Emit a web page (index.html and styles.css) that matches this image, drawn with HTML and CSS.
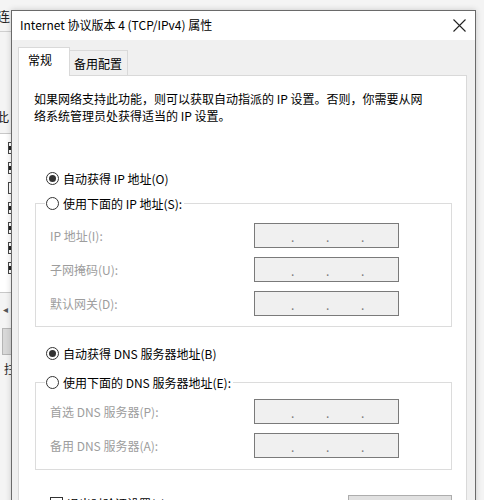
FILE: index.html
```html
<!DOCTYPE html>
<html lang="zh-CN">
<head>
<meta charset="utf-8">
<title>Internet 协议版本 4 (TCP/IPv4) 属性</title>
<link rel="stylesheet" href="styles.css">
</head>
<body>
<div class="desktop">
  <div class="bgwin">
    <div class="bg-char bg-top">连</div>
    <div class="bg-sep"></div>
    <div class="bg-char bg-mid">此</div>
    <div class="bg-list">
      <span class="bg-chk on"></span>
      <span class="bg-chk on"></span>
      <span class="bg-chk"></span>
      <span class="bg-chk on"></span>
      <span class="bg-chk on"></span>
      <span class="bg-chk on"></span>
      <span class="bg-chk on"></span>
    </div>
    <div class="bg-arrow">◂</div>
    <div class="bg-btn"></div>
    <div class="bg-char bg-low">拄</div>
  </div>

  <div class="dialog">
    <div class="titlebar">
      <span class="title">Internet 协议版本 4 (TCP/IPv4) 属性</span>
      <svg class="close" width="13" height="13" viewBox="0 0 13 13"><path d="M0.5 0.5 L12.5 12.5 M12.5 0.5 L0.5 12.5" stroke="#222" stroke-width="1.1" fill="none"/></svg>
    </div>
    <div class="body">
      <div class="tabs">
        <div class="tab active">常规</div>
        <div class="tab">备用配置</div>
      </div>
      <div class="panel">
        <p class="intro">如果网络支持此功能，则可以获取自动指派的 IP 设置。否则，你需要从网<br>络系统管理员处获得适当的 IP 设置。</p>

        <div class="radio-row first">
          <span class="radio checked"></span><span>自动获得 IP 地址(O)</span>
        </div>
        <fieldset class="group">
          <legend><span class="radio-row"><span class="radio"></span><span>使用下面的 IP 地址(S):</span></span></legend>
          <div class="fields">
            <span class="lbl">IP 地址(I):</span>
            <span class="ipbox"><i>.</i><i>.</i><i>.</i></span>
            <span class="lbl">子网掩码(U):</span>
            <span class="ipbox"><i>.</i><i>.</i><i>.</i></span>
            <span class="lbl">默认网关(D):</span>
            <span class="ipbox"><i>.</i><i>.</i><i>.</i></span>
          </div>
        </fieldset>

        <div class="radio-row second">
          <span class="radio checked"></span><span>自动获得 DNS 服务器地址(B)</span>
        </div>
        <fieldset class="group">
          <legend><span class="radio-row"><span class="radio"></span><span>使用下面的 DNS 服务器地址(E):</span></span></legend>
          <div class="fields dns">
            <span class="lbl">首选 DNS 服务器(P):</span>
            <span class="ipbox"><i>.</i><i>.</i><i>.</i></span>
            <span class="lbl">备用 DNS 服务器(A):</span>
            <span class="ipbox"><i>.</i><i>.</i><i>.</i></span>
          </div>
        </fieldset>

        <div class="bottom-row">
          <span class="check-row"><span class="checkbox"></span><span>退出时验证设置(L)</span></span>
          <span class="button">高级(V)...</span>
        </div>
      </div>
    </div>
  </div>
</div>
</body>
</html>
```

FILE: styles.css
```css
* { box-sizing: border-box; }
html, body { margin: 0; padding: 0; }
body {
  width: 484px;
  height: 500px;
  overflow: hidden;
  font-family: "Noto Sans CJK SC", "Noto Sans", sans-serif;
  font-size: 12px;
  color: #000;
}
.desktop {
  position: relative;
  width: 484px;
  height: 500px;
  background: #ebebeb;
  overflow: hidden;
}

/* background window (mostly hidden) */
.bgwin {
  width: 484px;
  height: 500px;
  background: #f4f4f4;
  display: flex;
  flex-direction: column;
  align-items: flex-start;
}
.bg-char { font-size: 13px; line-height: 16px; color: #222; }
.bg-top { margin: 8px 0 0 -3px; }
.bg-sep { width: 12px; height: 1px; background: #cfcfcf; margin-top: 7px; }
.bg-mid { margin: 77px 0 0 -4px; }
.bg-list {
  margin-top: 8px;
  width: 12px;
  height: 160px;
  border-top: 1px solid #c8c8c8;
  border-bottom: 1px solid #c8c8c8;
  background: #fff;
  display: flex;
  flex-direction: column;
  align-items: flex-end;
  padding-top: 8px;
  gap: 8px;
}
.bg-chk { width: 4px; height: 12px; border: 1px solid #444; border-right: none; background: #fff; }
.bg-chk.on { background: linear-gradient(#fff 3px, #222 3px, #222 7px, #fff 7px); }
.bg-arrow { margin: 10px 0 0 3px; font-size: 10px; color: #555; line-height: 12px; }
.bg-btn { margin-top: 13px; width: 10px; height: 27px; background: #d8d8d8; border: 1px solid #b5b5b5; margin-left: 2px; }
.bg-low { margin: 6px 0 0 4px; font-size: 12px; }

/* dialog */
.dialog {
  position: absolute;
  left: 11px;
  top: 10px;
  width: 465px;
  height: 540px;
  border: 1px solid #6a6a6a;
  background: #f0f0f0;
  box-shadow: 0 0 6px rgba(0,0,0,0.18);
  display: flex;
  flex-direction: column;
  overflow: hidden;
}
.titlebar {
  flex: none;
  height: 29px;
  background: #fff;
  display: flex;
  align-items: center;
  justify-content: space-between;
  padding: 0 9px 2px 8px;
}
.title { font-size: 12px; line-height: 16px; }
.close { display: block; margin-top: 1px; }

.body { flex: none; padding: 7px 8px 0 6px; }
.tabs { display: flex; align-items: flex-end; height: 28px; }
.tab {
  background: #f0f0f0;
  border: 1px solid #d9d9d9;
  border-bottom: none;
  height: 25px;
  padding: 4px 4px 0 4px;
  line-height: 18px;
}
.tab.active {
  position: relative;
  z-index: 1;
  background: #fff;
  height: 29px;
  width: 52px;
  padding: 3px 0 0 9px;
  margin-bottom: -1px;
}
.tab:not(.active) { width: 58px; border-left: none; }

.panel {
  background: #fff;
  border: 1px solid #d9d9d9;
  padding: 14px 14px 0 15px;
  height: 460px;
}
.intro {
  margin: 0;
  line-height: 17px;
  white-space: nowrap;
}

.radio-row {
  display: flex;
  align-items: center;
  height: 20px;
  gap: 4px;
  white-space: nowrap;
}
.radio-row.first { margin-top: 44px; padding-left: 12px; }
.radio-row.second { margin-top: 16px; padding-left: 12px; }
.radio {
  width: 13px;
  height: 13px;
  border: 1px solid #333;
  border-radius: 50%;
  background: #fff;
  display: inline-flex;
  align-items: center;
  justify-content: center;
  flex: none;
}
.radio.checked::after {
  content: "";
  width: 7px;
  height: 7px;
  border-radius: 50%;
  background: #333;
}

.group {
  margin: 5px 0 0 1px;
  padding: 0;
  width: 417px;
  border: 1px solid #dcdcdc;
  min-width: 0;
}
.radio-row.second + .group { margin-top: 9px; }
.group legend {
  margin-left: 9px;
  padding: 0 2px 0 1px;
  background: #fff;
}
.fields {
  display: grid;
  grid-template-columns: 204px 145px;
  grid-auto-rows: 25px;
  row-gap: 9px;
  padding: 10px 0 10px 14px;
  align-items: center;
}
.fields.dns { padding: 7px 0 11px 14px; }
.lbl { color: #9d9d9d; white-space: nowrap; }
.ipbox {
  height: 25px;
  border: 1px solid #7a7a7a;
  background: #f0f0f0;
  display: flex;
  align-items: center;
  padding: 3px 0 0 36px;
  gap: 33px;
}
.ipbox i {
  font-style: normal;
  width: 2px;
  color: #7a7a7a;
  line-height: 10px;
  font-size: 12px;
}

.bottom-row {
  margin-top: 23px;
  width: 418px;
  display: flex;
  justify-content: space-between;
  align-items: flex-start;
}
.check-row {
  display: flex;
  align-items: center;
  height: 20px;
  gap: 4px;
  padding-left: 16px;
}
.checkbox { width: 13px; height: 13px; border: 1px solid #333; background: #fff; }
.button {
  margin-top: 2px;
  width: 104px;
  height: 23px;
  background: #e1e1e1;
  border: 1px solid #adadad;
  display: flex;
  align-items: center;
  justify-content: center;
}
```
